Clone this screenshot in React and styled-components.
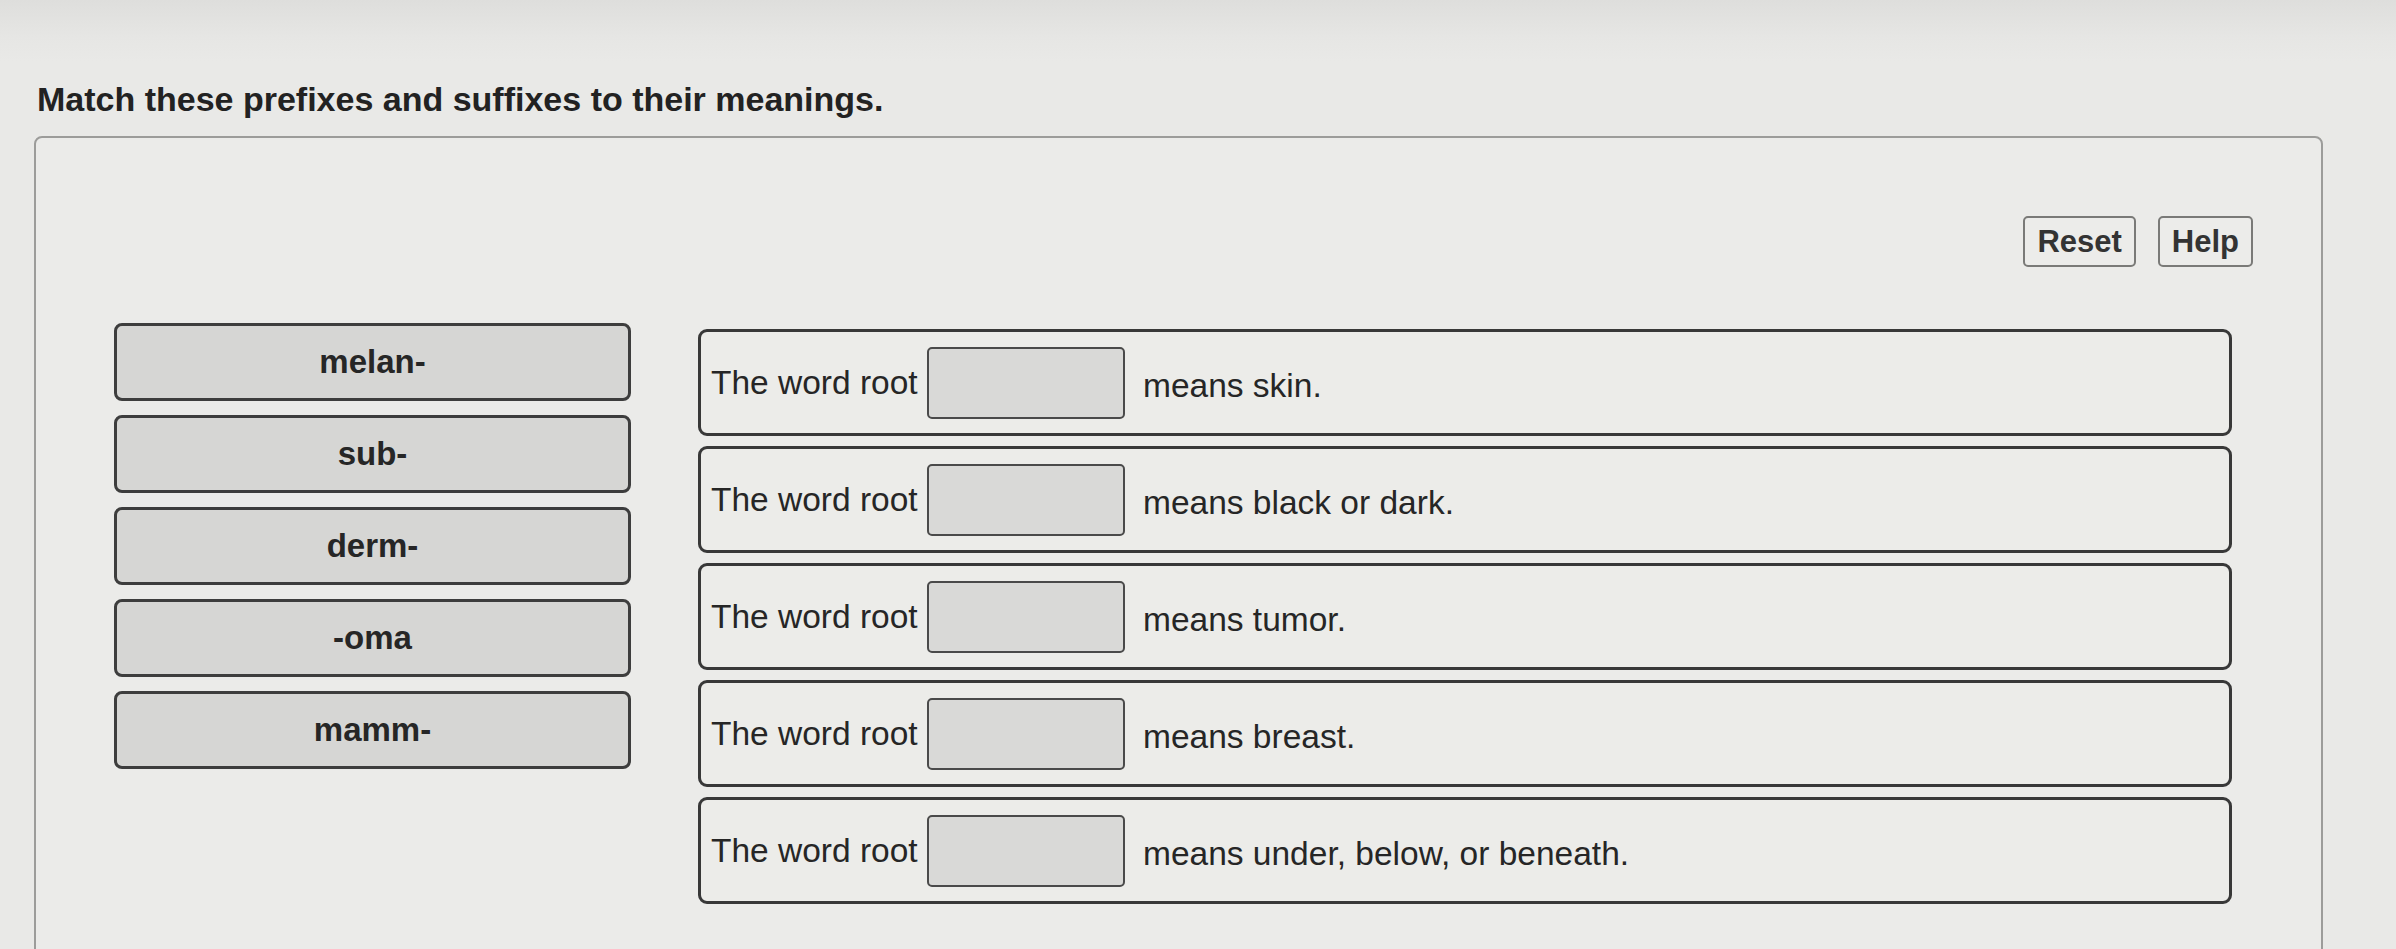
import React from 'react';
import styled, { createGlobalStyle } from 'styled-components';

const GlobalStyle = createGlobalStyle`
  html, body {
    margin: 0;
    padding: 0;
    background: #e9e9e7;
    font-family: "Liberation Sans", Arial, sans-serif;
    color: #262626;
  }
`;

const prefixes = ['melan-', 'sub-', 'derm-', '-oma', 'mamm-'];

const meanings = [
  'means skin.',
  'means black or dark.',
  'means tumor.',
  'means breast.',
  'means under, below, or beneath.',
];

function App() {
  return (
    <Page>
      <GlobalStyle />
      <TopBand />
      <Title>Match these prefixes and suffixes to their meanings.</Title>
      <Panel>
        <Toolbar>
          <ToolButton>Reset</ToolButton>
          <ToolButton>Help</ToolButton>
        </Toolbar>
        <Board>
          <TileColumn>
            {prefixes.map((p) => (
              <Tile key={p}>{p}</Tile>
            ))}
          </TileColumn>
          <RowColumn>
            {meanings.map((m) => (
              <Row key={m}>
                <Lead>The word root</Lead>
                <DropBox />
                <Meaning>{m}</Meaning>
              </Row>
            ))}
          </RowColumn>
        </Board>
      </Panel>
    </Page>
  );
}

export default App;

const Page = styled.div`
  width: 2396px;
  height: 949px;
  overflow: hidden;
  background: #e9e9e7;
`;

const TopBand = styled.div`
  height: 62px;
  background: linear-gradient(180deg, #dededc 0%, #e6e6e4 60%, #e9e9e7 100%);
`;

const Title = styled.h1`
  margin: 0;
  padding: 0 0 0 37px;
  height: 74px;
  font-size: 34px;
  line-height: 74px;
  font-weight: 700;
  color: #222;
`;

const Panel = styled.div`
  margin: 0 0 0 34px;
  width: 2289px;
  height: 860px;
  box-sizing: border-box;
  border: 2px solid #9c9c9a;
  border-radius: 8px;
  background: #ebebe9;
  padding: 78px 68px 0 78px;
`;

const Toolbar = styled.div`
  display: flex;
  justify-content: flex-end;
  gap: 22px;
  height: 51px;
`;

const ToolButton = styled.button`
  height: 51px;
  padding: 0 12px;
  box-sizing: border-box;
  border: 2px solid #7a7a78;
  border-radius: 5px;
  background: #ececea;
  font-family: "Liberation Sans", Arial, sans-serif;
  font-size: 31px;
  font-weight: 700;
  color: #333;
`;

const Board = styled.div`
  display: flex;
  gap: 67px;
  margin-top: 56px;
  padding-right: 21px;
`;

const TileColumn = styled.div`
  width: 517px;
  flex-shrink: 0;
  display: flex;
  flex-direction: column;
  gap: 14px;
`;

const Tile = styled.div`
  height: 78px;
  box-sizing: border-box;
  display: flex;
  align-items: center;
  justify-content: center;
  background: #d6d6d4;
  border: 3px solid #3d3d3d;
  border-radius: 8px;
  font-size: 33px;
  font-weight: 700;
  color: #262626;
`;

const RowColumn = styled.div`
  flex: 1;
  display: flex;
  flex-direction: column;
  gap: 10px;
  margin-top: 6px;
`;

const Row = styled.div`
  height: 107px;
  box-sizing: border-box;
  display: flex;
  align-items: center;
  padding: 0 10px;
  background: #ecece9;
  border: 3px solid #383838;
  border-radius: 9px;
  font-size: 33.5px;
  color: #262626;
`;

const Lead = styled.span`
  width: 210px;
  white-space: nowrap;
`;

const DropBox = styled.div`
  width: 198px;
  height: 72px;
  box-sizing: border-box;
  margin: 0 18px 0 6px;
  background: #d9d9d7;
  border: 2px solid #4a4a4a;
  border-radius: 5px;
`;

const Meaning = styled.span`
  padding-top: 6px;
  white-space: nowrap;
`;
